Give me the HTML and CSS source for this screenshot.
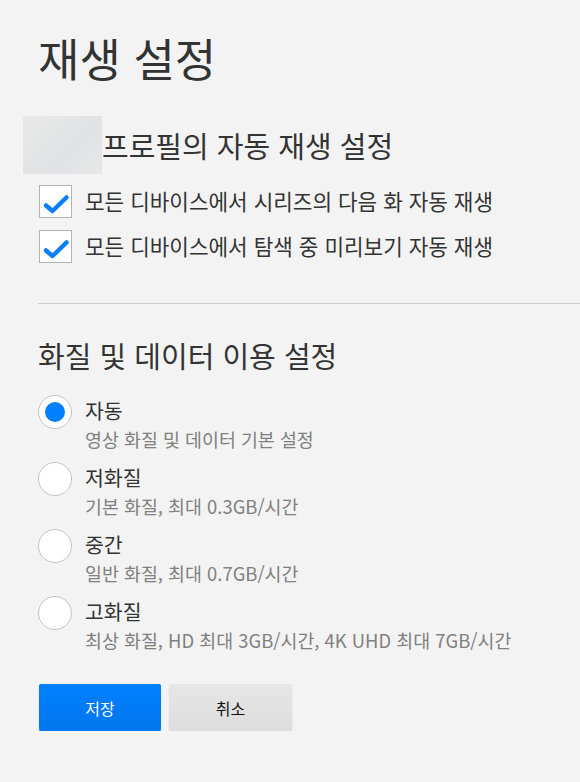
FILE: index.html
```html
<!DOCTYPE html>
<html lang="ko">
<head>
<meta charset="utf-8">
<link rel="stylesheet" href="styles.css">
</head>
<body>
<div class="page">
  <h1 class="title">재생 설정</h1>

  <section class="autoplay">
    <div class="profile-head">
      <div class="avatar"></div>
      <h2 class="profile-title">프로필의 자동 재생 설정</h2>
    </div>
    <label class="check-row">
      <span class="checkbox">
        <svg viewBox="0 0 33 33" width="33" height="33"><path d="M7 20.5 L13.5 26 L27.5 12.5" fill="none" stroke="#0a80ff" stroke-width="4.5" stroke-linecap="round" stroke-linejoin="round"/></svg>
      </span>
      <span class="check-text">모든 디바이스에서 시리즈의 다음 화 자동 재생</span>
    </label>
    <label class="check-row">
      <span class="checkbox">
        <svg viewBox="0 0 33 33" width="33" height="33"><path d="M7 20.5 L13.5 26 L27.5 12.5" fill="none" stroke="#0a80ff" stroke-width="4.5" stroke-linecap="round" stroke-linejoin="round"/></svg>
      </span>
      <span class="check-text">모든 디바이스에서 탐색 중 미리보기 자동 재생</span>
    </label>
  </section>

  <div class="divider"></div>

  <section class="quality">
    <h2 class="section-title">화질 및 데이터 이용 설정</h2>
    <div class="radio-list">
      <div class="radio-row">
        <span class="radio selected"><span class="dot"></span></span>
        <div class="radio-text">
          <div class="radio-label">자동</div>
          <div class="radio-desc">영상 화질 및 데이터 기본 설정</div>
        </div>
      </div>
      <div class="radio-row">
        <span class="radio"></span>
        <div class="radio-text">
          <div class="radio-label">저화질</div>
          <div class="radio-desc">기본 화질, 최대 0.3GB/시간</div>
        </div>
      </div>
      <div class="radio-row">
        <span class="radio"></span>
        <div class="radio-text">
          <div class="radio-label">중간</div>
          <div class="radio-desc">일반 화질, 최대 0.7GB/시간</div>
        </div>
      </div>
      <div class="radio-row">
        <span class="radio"></span>
        <div class="radio-text">
          <div class="radio-label">고화질</div>
          <div class="radio-desc">최상 화질, HD 최대 3GB/시간, 4K UHD 최대 7GB/시간</div>
        </div>
      </div>
    </div>
  </section>

  <div class="buttons">
    <button class="btn btn-save">저장</button>
    <button class="btn btn-cancel">취소</button>
  </div>
</div>
</body>
</html>
```

FILE: styles.css
```css
* { box-sizing: border-box; }
html, body {
  margin: 0;
  padding: 0;
  background: #f3f3f3;
  font-family: "Noto Sans CJK KR", "Noto Sans", sans-serif;
  color: #333;
}
.page {
  padding: 28px 0 0 38px;
}
.title {
  margin: 0;
  font-size: 45px;
  font-weight: 400;
  line-height: 60px;
  color: #333;
}
.autoplay {
  margin-top: 28px;
}
.profile-head {
  display: flex;
  align-items: center;
  margin-left: -15px;
}
.avatar {
  width: 79px;
  height: 58px;
  flex: none;
  background: linear-gradient(135deg, #e9e9e9 0%, #e1e2e3 55%, #e6e7e7 100%);
}
.profile-title {
  margin: 0;
  font-size: 29px;
  font-weight: 400;
  line-height: 36px;
  color: #333;
}
.check-row {
  display: flex;
  align-items: center;
  gap: 13px;
  margin-top: 11px;
  padding-left: 1px;
}
.check-row + .check-row { margin-top: 12px; }
.checkbox {
  width: 33px;
  height: 33px;
  background: #fff;
  border: 1px solid #b3b3b3;
  display: block;
  flex: none;
  position: relative;
}
.checkbox svg {
  position: absolute;
  left: -1px;
  top: -1px;
}
.check-text {
  font-size: 21.3px;
  line-height: 30px;
  color: #333;
  position: relative;
  top: -1px;
}
.divider {
  height: 1px;
  background: #cccccc;
  margin-top: 40px;
}
.section-title {
  margin: 33px 0 0;
  font-size: 29px;
  font-weight: 400;
  line-height: 36px;
  color: #333;
}
.radio-list {
  display: flex;
  flex-direction: column;
  gap: 9px;
  margin-top: 19px;
}
.radio-row {
  display: flex;
  align-items: flex-start;
  gap: 13px;
}
.radio {
  width: 34px;
  height: 34px;
  border-radius: 50%;
  background: #fff;
  border: 1px solid #c4c4c4;
  flex: none;
  display: flex;
  align-items: center;
  justify-content: center;
  margin-top: 3px;
}
.radio .dot {
  width: 20px;
  height: 20px;
  border-radius: 50%;
  background: #0080ff;
}
.radio-label {
  font-size: 20.5px;
  line-height: 36px;
  color: #333;
}
.radio-desc {
  font-size: 18.4px;
  line-height: 22px;
  color: #808080;
}
.buttons {
  display: flex;
  gap: 8px;
  margin-top: 33px;
  padding-left: 1px;
}
.btn {
  width: 122px;
  height: 47px;
  border: none;
  border-radius: 2px;
  font-family: "Noto Sans CJK KR", "Noto Sans", sans-serif;
  font-size: 16px;
  cursor: pointer;
  padding: 0;
}
.btn-save {
  background: linear-gradient(#0080ff, #0277ec);
  color: #fff;
  box-shadow: 0 1px 1px rgba(0,0,0,0.35);
}
.btn-cancel {
  width: 123px;
  background: linear-gradient(#e6e6e6, #dddddd);
  color: #111;
  box-shadow: 0 1px 1px rgba(0,0,0,0.2);
}
```
